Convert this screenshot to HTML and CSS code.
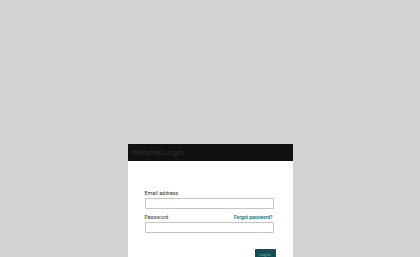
FILE: index.html
```html
<!DOCTYPE html>
<html lang="en">
<head>
    <meta charset="UTF-8">
    <meta name="viewport" content="width=device-width, initial-scale=1.0">
    <title>Webmail Login</title>
    <link rel="stylesheet" href="styles.css">
</head>
<body>
    <div class="login">
        <div class="login_head">Webmail Login</div>
        <form class="login_body">
            <div class="field">
                <div class="label_row">
                    <label>Email address</label>
                </div>
                <input type="text" class="text_input">
            </div>
            <div class="field">
                <div class="label_row">
                    <label>Password</label>
                    <a href="#" class="forgot">Forgot password?</a>
                </div>
                <input type="password" class="text_input">
            </div>
            <div class="actions">
                <button type="button" class="btn">Log In</button>
            </div>
        </form>
    </div>
</body>
</html>
```

FILE: styles.css
```css
html, body{
    margin: 0;
    height: 100%;
    overflow: hidden;
}
body{
    background-color: #d3d3d3;
    font-family: Roboto, "Liberation Sans", Arial, sans-serif;
}
.login{
    width: 165px;
    margin: 144px auto 0;
    background-color: #fff;
    min-height: 200px;
}
.login_head{
    height: 17px;
    line-height: 17px;
    padding-left: 4px;
    background-color: #111;
    color: #3d3d3d;
    font-size: 8px;
    font-weight: 300;
}
.login_body{
    margin: 0;
    padding: 28px 19px 0 17px;
}
.field{
    margin-bottom: 4px;
}
.label_row{
    display: flex;
    justify-content: space-between;
    align-items: center;
    height: 8px;
    margin-bottom: 1px;
}
.label_row label{
    font-size: 5.4px;
    color: #333;
}
.forgot{
    font-size: 4.8px;
    font-weight: bold;
    color: #1f7d86;
    text-decoration: none;
    margin-right: 1px;
}
.text_input{
    display: block;
    box-sizing: border-box;
    width: 100%;
    height: 11px;
    margin: 0;
    padding: 0;
    border: 1px solid #c4c4c4;
    border-radius: 1px;
    background: #fff;
}
.actions{
    display: flex;
    justify-content: flex-end;
    margin-top: 16px;
    margin-right: -2px;
}
.btn{
    width: 21px;
    height: 11px;
    padding: 0;
    border: none;
    border-radius: 1px;
    background-color: #0f4f55;
    color: #8fb9bc;
    font-family: Roboto, "Liberation Sans", Arial, sans-serif;
    font-size: 4px;
}
```
